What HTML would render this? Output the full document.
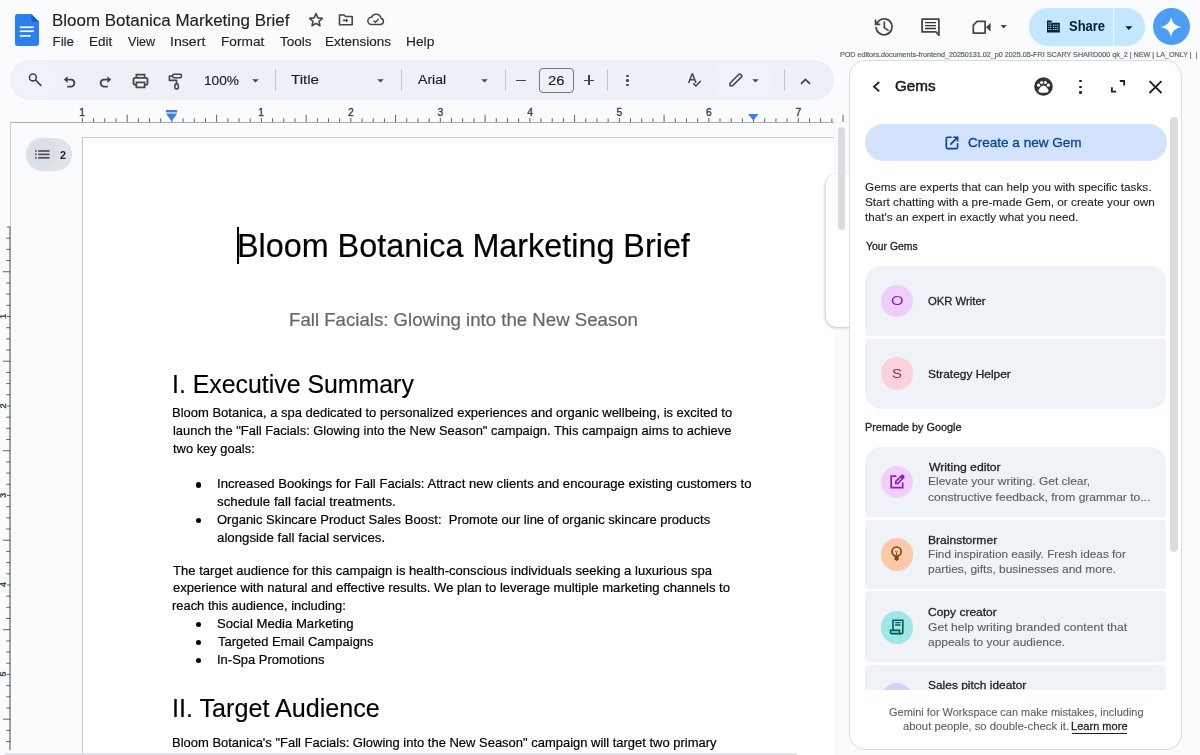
<!DOCTYPE html>
<html><head><meta charset="utf-8">
<style>
*{margin:0;padding:0;box-sizing:border-box}
html,body{width:1200px;height:755px;overflow:hidden;background:#f9fbfd;font-family:"Liberation Sans",sans-serif;color:#1f1f1f;position:relative}
.abs{position:absolute}
.t{position:absolute;white-space:nowrap;line-height:normal;transform-origin:0 0}
svg{position:absolute;overflow:visible}
</style></head><body>
<svg style="left:15px;top:14px;" width="24" height="32" viewBox="0 0 24 32"><path d="M2.2 0H16.3L24 7.8V29.6A2.3 2.3 0 0 1 21.7 32H2.3A2.3 2.3 0 0 1 0 29.6V2.3A2.3 2.3 0 0 1 2.2 0Z" fill="#2b7ff0"/><path d="M16.3 0L24 7.8H18.3A2 2 0 0 1 16.3 5.8Z" fill="#1a5fd0"/><rect x="4.8" y="12.4" width="14" height="1.7" fill="#fff"/><rect x="4.8" y="16.4" width="14" height="1.7" fill="#fff"/><rect x="4.8" y="21" width="10.8" height="1.7" fill="#fff"/></svg>
<div class="t " style="left:51.61px;top:10.91px;font-size:16.40px;color:#1f1f1f;transform:scaleX(1.0346);-webkit-text-stroke:0.15px #1f1f1f;">Bloom Botanica Marketing Brief</div>
<svg style="left:308px;top:12px;" width="16" height="15" viewBox="0 0 16 15"><path d="M8 1.6L9.9 5.9L14.4 6.3L11 9.3L12 13.8L8 11.4L4 13.8L5 9.3L1.6 6.3L6.1 5.9Z" fill="none" stroke="#444746" stroke-width="1.6" stroke-linejoin="round"/></svg>
<svg style="left:338px;top:14px;" width="16" height="12" viewBox="0 0 16 12"><path d="M1.5 1H6L7.5 2.5H14.2V10.8H1.5Z" fill="none" stroke="#444746" stroke-width="1.6" stroke-linejoin="round"/><path d="M5 6.4H8.6" stroke="#444746" stroke-width="1.6"/><path d="M8 4.2L10.4 6.4L8 8.6Z" fill="#444746"/></svg>
<svg style="left:367px;top:14px;" width="18" height="12" viewBox="0 0 18 12"><path d="M4.5 10.6H13.8A3.3 3.3 0 0 0 14 4.2A5 5 0 0 0 4.6 3.2A3.7 3.7 0 0 0 4.5 10.6Z" fill="none" stroke="#444746" stroke-width="1.5"/><path d="M6.6 6.6L8.4 8.3L11.6 5" fill="none" stroke="#444746" stroke-width="1.5"/></svg>
<div class="t " style="left:52.62px;top:33.86px;font-size:13.20px;color:#1f1f1f;-webkit-text-stroke:0.15px #1f1f1f;">File</div>
<div class="t " style="left:88.60px;top:33.86px;font-size:13.20px;color:#1f1f1f;transform:scaleX(1.0201);-webkit-text-stroke:0.15px #1f1f1f;">Edit</div>
<div class="t " style="left:128.24px;top:33.86px;font-size:13.20px;color:#1f1f1f;transform:scaleX(0.9524);-webkit-text-stroke:0.15px #1f1f1f;">View</div>
<div class="t " style="left:169.99px;top:33.86px;font-size:13.20px;color:#1f1f1f;transform:scaleX(1.0726);-webkit-text-stroke:0.15px #1f1f1f;">Insert</div>
<div class="t " style="left:220.58px;top:33.86px;font-size:13.20px;color:#1f1f1f;transform:scaleX(1.0363);-webkit-text-stroke:0.15px #1f1f1f;">Format</div>
<div class="t " style="left:279.70px;top:33.86px;font-size:13.20px;color:#1f1f1f;transform:scaleX(1.0252);-webkit-text-stroke:0.15px #1f1f1f;">Tools</div>
<div class="t " style="left:325.19px;top:33.86px;font-size:13.20px;color:#1f1f1f;transform:scaleX(1.0236);-webkit-text-stroke:0.15px #1f1f1f;">Extensions</div>
<div class="t " style="left:405.57px;top:33.86px;font-size:13.20px;color:#1f1f1f;transform:scaleX(1.0427);-webkit-text-stroke:0.15px #1f1f1f;">Help</div>
<svg style="left:870px;top:14px;" width="30" height="26" viewBox="0 0 30 26"><path d="M6.1 12.9A8 8 0 1 0 9.6 6.2" fill="none" stroke="#444746" stroke-width="1.75"/><path d="M5.6 5.6V10.3H10.3M5.6 10.3L9.8 6.1" fill="none" stroke="#444746" stroke-width="1.75"/><path d="M14.3 7.5V13.6L18.6 16.6" fill="none" stroke="#444746" stroke-width="1.75"/></svg>
<svg style="left:916px;top:14px;" width="30" height="26" viewBox="0 0 30 26"><path d="M6.1 5.1H22.9V21.2L19.9 17.9H6.1Z" fill="none" stroke="#444746" stroke-width="1.75" stroke-linejoin="round"/><path d="M9.1 8.6H20M9.1 11.55H20M9.1 14.5H20" stroke="#333" stroke-width="1.3"/></svg>
<svg style="left:966px;top:14px;" width="44" height="26" viewBox="0 0 44 26"><path d="M11.2 7.3H19.1V19.1H7.3V11.2Z" fill="none" stroke="#444746" stroke-width="1.75" stroke-linejoin="round"/><path d="M20 13.2L24.6 8.8V17.6Z" fill="#444746"/><path d="M34.5 11H40.8L37.65 14.4Z" fill="#444746"/></svg>
<div class="abs" style="left:1029px;top:8px;width:116px;height:38px;background:#c2e7ff;border-radius:19px;"></div>
<div class="abs" style="left:1113px;top:8px;width:1px;height:38px;background:#f9fbfd;"></div>
<svg style="left:1046px;top:19px;" width="16" height="15" viewBox="0 0 16 15"><path d="M1 1.4H5.7V3.75H13.8V13.4H1Z" fill="#001d35"/><rect x="2.3" y="3.4" width="1.2" height="1.1" fill="#c2e7ff"/><rect x="2.3" y="5.6" width="1.2" height="1.1" fill="#c2e7ff"/><rect x="2.3" y="7.8" width="1.2" height="1.1" fill="#c2e7ff"/><rect x="2.3" y="10.0" width="1.2" height="1.1" fill="#c2e7ff"/><rect x="4.2" y="3.4" width="1.2" height="1.1" fill="#c2e7ff"/><rect x="4.2" y="5.6" width="1.2" height="1.1" fill="#c2e7ff"/><rect x="4.2" y="7.8" width="1.2" height="1.1" fill="#c2e7ff"/><rect x="4.2" y="10.0" width="1.2" height="1.1" fill="#c2e7ff"/><rect x="7.0" y="5.6" width="1.2" height="1.1" fill="#c2e7ff"/><rect x="7.0" y="7.8" width="1.2" height="1.1" fill="#c2e7ff"/><rect x="7.0" y="10.0" width="1.2" height="1.1" fill="#c2e7ff"/><rect x="9.2" y="5.6" width="1.2" height="1.1" fill="#c2e7ff"/><rect x="9.2" y="7.8" width="1.2" height="1.1" fill="#c2e7ff"/><rect x="9.2" y="10.0" width="1.2" height="1.1" fill="#c2e7ff"/><rect x="11.2" y="5.6" width="1.2" height="1.1" fill="#c2e7ff"/><rect x="11.2" y="7.8" width="1.2" height="1.1" fill="#c2e7ff"/><rect x="11.2" y="10.0" width="1.2" height="1.1" fill="#c2e7ff"/></svg>
<div class="t " style="left:1069.13px;top:17.74px;font-size:14.20px;color:#001d35;font-weight:700;transform:scaleX(0.9126);">Share</div>
<svg style="left:1125px;top:26px;" width="8" height="4" viewBox="0 0 8 4"><path d="M0.3 0.2H7.3L3.8 3.9Z" fill="#001d35"/></svg>
<div class="abs" style="left:1152.7px;top:8.2px;width:37px;height:37px;background:#4b9df6;border-radius:50%;"></div>
<svg style="left:1160px;top:17px;" width="22" height="20" viewBox="0 0 22 20"><path d="M11 -0.2C11.8 5.3 15.2 9.1 21.6 10C15.2 10.9 11.8 14.7 11 20.2C10.2 14.7 6.8 10.9 0.4 10C6.8 9.1 10.2 5.3 11 -0.2Z" fill="#fff"/></svg>
<div class="t " style="left:840.41px;top:50.38px;font-size:7.30px;color:#5f6368;transform:scaleX(0.9835);-webkit-text-stroke:0.2px #5f6368;">POD editors.documents-frontend_20250131.02_p0 2025.05-FRI SCARY SHARD000 qk_2 | NEW | LA_ONLY | &nbsp;|</div>
<div class="abs" style="left:10px;top:60px;width:824px;height:40px;background:#edf1f7;border-radius:20px;"></div>
<div class="abs" style="left:12px;top:62px;width:44px;height:36px;background:#eff2f8;border-radius:18px 8px 8px 18px;"></div>
<svg style="left:24px;top:68px;" width="20" height="20" viewBox="0 0 20 20"><circle cx="8.9" cy="9.4" r="3.45" fill="none" stroke="#444746" stroke-width="1.6"/><path d="M11.5 12L17.3 17.8" stroke="#444746" stroke-width="1.7"/></svg>
<svg style="left:63px;top:75px;" width="14" height="13" viewBox="0 0 14 13"><path d="M3 4.6H8.6A3.6 3.6 0 0 1 8.6 11.6H4.2" fill="none" stroke="#444746" stroke-width="1.8"/><path d="M0.8 4.6L4.6 1.2V8Z" fill="#444746"/></svg>
<svg style="left:98px;top:75px;" width="14" height="13" viewBox="0 0 14 13"><path d="M11 4.6H5.4A3.6 3.6 0 0 0 5.4 11.6H9.8" fill="none" stroke="#444746" stroke-width="1.8"/><path d="M13.2 4.6L9.4 1.2V8Z" fill="#444746"/></svg>
<svg style="left:132px;top:73px;" width="17" height="16" viewBox="0 0 17 16"><path d="M4.4 4.6V1.6H12.6V4.6" fill="none" stroke="#444746" stroke-width="1.7"/><rect x="1.5" y="4.8" width="14" height="7" rx="1.6" fill="none" stroke="#444746" stroke-width="1.8"/><rect x="4.4" y="9.4" width="8.2" height="5" fill="#edf1f7" stroke="#444746" stroke-width="1.7"/></svg>
<svg style="left:168px;top:73px;" width="15" height="17" viewBox="0 0 15 17"><rect x="4.8" y="1.3" width="8.6" height="3.4" rx="1" fill="none" stroke="#444746" stroke-width="1.6"/><path d="M4.8 3H1.4V7.4H8.6V10.6" fill="none" stroke="#444746" stroke-width="1.6" stroke-linejoin="round"/><rect x="6.9" y="10.9" width="3.4" height="5" rx="1.5" fill="none" stroke="#444746" stroke-width="1.6"/></svg>
<div class="t " style="left:204.16px;top:73.46px;font-size:13.20px;color:#1f1f1f;transform:scaleX(1.0376);-webkit-text-stroke:0.15px #1f1f1f;">100%</div>
<svg style="left:252px;top:79px;" width="7" height="4" viewBox="0 0 7 4"><path d="M0.2 0.2H6.8L3.5 3.6Z" fill="#444746"/></svg>
<div class="abs" style="left:275px;top:69px;width:1px;height:22px;background:#c7c7c7;"></div>
<div class="abs" style="left:401px;top:69px;width:1px;height:22px;background:#c7c7c7;"></div>
<div class="abs" style="left:505px;top:69px;width:1px;height:22px;background:#c7c7c7;"></div>
<div class="abs" style="left:606.5px;top:69px;width:1px;height:22px;background:#c7c7c7;"></div>
<div class="abs" style="left:784px;top:69px;width:1px;height:22px;background:#c7c7c7;"></div>
<div class="t " style="left:290.86px;top:72.16px;font-size:13.20px;color:#1f1f1f;transform:scaleX(1.1458);-webkit-text-stroke:0.15px #1f1f1f;">Title</div>
<svg style="left:377px;top:79px;" width="7" height="4" viewBox="0 0 7 4"><path d="M0.2 0.2H6.8L3.5 3.6Z" fill="#444746"/></svg>
<div class="t " style="left:417.97px;top:72.16px;font-size:13.20px;color:#1f1f1f;transform:scaleX(1.0667);-webkit-text-stroke:0.15px #1f1f1f;">Arial</div>
<svg style="left:481px;top:79px;" width="7" height="4" viewBox="0 0 7 4"><path d="M0.2 0.2H6.8L3.5 3.6Z" fill="#444746"/></svg>
<div class="abs" style="left:516px;top:79.5px;width:10px;height:1.8px;background:#444746;"></div>
<div class="abs" style="left:538.5px;top:68px;width:35.5px;height:25px;border:1px solid #747775;border-radius:4px;"></div>
<div class="t " style="left:548.06px;top:72.86px;font-size:13.20px;color:#1f1f1f;transform:scaleX(1.1162);-webkit-text-stroke:0.15px #1f1f1f;">26</div>
<div class="abs" style="left:583.8px;top:79.5px;width:10px;height:1.8px;background:#444746;"></div>
<div class="abs" style="left:587.9px;top:75.4px;width:1.8px;height:10px;background:#444746;"></div>
<div class="abs" style="left:626.2px;top:74.9px;width:2.4px;height:2.4px;background:#444746;border-radius:50%;"></div>
<div class="abs" style="left:626.2px;top:79.4px;width:2.4px;height:2.4px;background:#444746;border-radius:50%;"></div>
<div class="abs" style="left:626.2px;top:83.9px;width:2.4px;height:2.4px;background:#444746;border-radius:50%;"></div>
<svg style="left:686px;top:72px;" width="17" height="16" viewBox="0 0 17 16"><path d="M2.6 10.9L6.1 2H6.6L10 10.9M3.9 7.8H8.8" fill="none" stroke="#444746" stroke-width="1.5"/><path d="M7.3 11.4L9.9 14L14.8 9" fill="none" stroke="#444746" stroke-width="1.5"/></svg>
<div class="abs" style="left:716px;top:63px;width:58px;height:34px;background:#eff2f8;border-radius:8px;"></div>
<svg style="left:728px;top:72px;" width="16" height="16" viewBox="0 0 16 16"><path d="M2 13.8V11.2L10.9 2.3A1.2 1.2 0 0 1 12.6 2.3L13.5 3.2A1.2 1.2 0 0 1 13.5 4.9L4.6 13.8Z" fill="none" stroke="#444746" stroke-width="1.6" stroke-linejoin="round"/></svg>
<svg style="left:752px;top:79px;" width="7" height="4" viewBox="0 0 7 4"><path d="M0.2 0.2H6.8L3.5 3.6Z" fill="#444746"/></svg>
<svg style="left:800px;top:78px;" width="11" height="7" viewBox="0 0 11 7"><path d="M1 5.8L5.5 1.4L10 5.8" fill="none" stroke="#444746" stroke-width="1.8"/></svg>
<div class="abs" style="left:9.5px;top:121.6px;width:825px;height:1px;background:#a8acb1;"></div>
<div class="abs" style="left:9.5px;top:122px;width:1px;height:105px;background:#c9ccd0;"></div>
<div class="abs" style="left:9.3px;top:227px;width:1.4px;height:522.5px;background:#9ea2a7;"></div>
<svg style="left:0;top:0" width="1200" height="130"><rect x="81.90" y="118" width="1" height="4" fill="#5f6368"/><rect x="93.09" y="118.3" width="1" height="3.7" fill="#5f6368"/><rect x="104.27" y="118.3" width="1" height="3.7" fill="#5f6368"/><rect x="115.46" y="118.3" width="1" height="3.7" fill="#5f6368"/><rect x="126.64" y="114.8" width="1" height="7.2" fill="#5f6368"/><rect x="137.83" y="118.3" width="1" height="3.7" fill="#5f6368"/><rect x="149.02" y="118.3" width="1" height="3.7" fill="#5f6368"/><rect x="160.20" y="118.3" width="1" height="3.7" fill="#5f6368"/><rect x="171.39" y="118" width="1" height="4" fill="#5f6368"/><rect x="182.57" y="118.3" width="1" height="3.7" fill="#5f6368"/><rect x="193.76" y="118.3" width="1" height="3.7" fill="#5f6368"/><rect x="204.95" y="118.3" width="1" height="3.7" fill="#5f6368"/><rect x="216.13" y="114.8" width="1" height="7.2" fill="#5f6368"/><rect x="227.32" y="118.3" width="1" height="3.7" fill="#5f6368"/><rect x="238.50" y="118.3" width="1" height="3.7" fill="#5f6368"/><rect x="249.69" y="118.3" width="1" height="3.7" fill="#5f6368"/><rect x="260.88" y="118" width="1" height="4" fill="#5f6368"/><rect x="272.06" y="118.3" width="1" height="3.7" fill="#5f6368"/><rect x="283.25" y="118.3" width="1" height="3.7" fill="#5f6368"/><rect x="294.43" y="118.3" width="1" height="3.7" fill="#5f6368"/><rect x="305.62" y="114.8" width="1" height="7.2" fill="#5f6368"/><rect x="316.81" y="118.3" width="1" height="3.7" fill="#5f6368"/><rect x="327.99" y="118.3" width="1" height="3.7" fill="#5f6368"/><rect x="339.18" y="118.3" width="1" height="3.7" fill="#5f6368"/><rect x="350.36" y="118" width="1" height="4" fill="#5f6368"/><rect x="361.55" y="118.3" width="1" height="3.7" fill="#5f6368"/><rect x="372.74" y="118.3" width="1" height="3.7" fill="#5f6368"/><rect x="383.92" y="118.3" width="1" height="3.7" fill="#5f6368"/><rect x="395.11" y="114.8" width="1" height="7.2" fill="#5f6368"/><rect x="406.29" y="118.3" width="1" height="3.7" fill="#5f6368"/><rect x="417.48" y="118.3" width="1" height="3.7" fill="#5f6368"/><rect x="428.67" y="118.3" width="1" height="3.7" fill="#5f6368"/><rect x="439.85" y="118" width="1" height="4" fill="#5f6368"/><rect x="451.04" y="118.3" width="1" height="3.7" fill="#5f6368"/><rect x="462.22" y="118.3" width="1" height="3.7" fill="#5f6368"/><rect x="473.41" y="118.3" width="1" height="3.7" fill="#5f6368"/><rect x="484.60" y="114.8" width="1" height="7.2" fill="#5f6368"/><rect x="495.78" y="118.3" width="1" height="3.7" fill="#5f6368"/><rect x="506.97" y="118.3" width="1" height="3.7" fill="#5f6368"/><rect x="518.15" y="118.3" width="1" height="3.7" fill="#5f6368"/><rect x="529.34" y="118" width="1" height="4" fill="#5f6368"/><rect x="540.53" y="118.3" width="1" height="3.7" fill="#5f6368"/><rect x="551.71" y="118.3" width="1" height="3.7" fill="#5f6368"/><rect x="562.90" y="118.3" width="1" height="3.7" fill="#5f6368"/><rect x="574.08" y="114.8" width="1" height="7.2" fill="#5f6368"/><rect x="585.27" y="118.3" width="1" height="3.7" fill="#5f6368"/><rect x="596.46" y="118.3" width="1" height="3.7" fill="#5f6368"/><rect x="607.64" y="118.3" width="1" height="3.7" fill="#5f6368"/><rect x="618.83" y="118" width="1" height="4" fill="#5f6368"/><rect x="630.01" y="118.3" width="1" height="3.7" fill="#5f6368"/><rect x="641.20" y="118.3" width="1" height="3.7" fill="#5f6368"/><rect x="652.39" y="118.3" width="1" height="3.7" fill="#5f6368"/><rect x="663.57" y="114.8" width="1" height="7.2" fill="#5f6368"/><rect x="674.76" y="118.3" width="1" height="3.7" fill="#5f6368"/><rect x="685.94" y="118.3" width="1" height="3.7" fill="#5f6368"/><rect x="697.13" y="118.3" width="1" height="3.7" fill="#5f6368"/><rect x="708.32" y="118" width="1" height="4" fill="#5f6368"/><rect x="719.50" y="118.3" width="1" height="3.7" fill="#5f6368"/><rect x="730.69" y="118.3" width="1" height="3.7" fill="#5f6368"/><rect x="741.87" y="118.3" width="1" height="3.7" fill="#5f6368"/><rect x="753.06" y="114.8" width="1" height="7.2" fill="#5f6368"/><rect x="764.25" y="118.3" width="1" height="3.7" fill="#5f6368"/><rect x="775.43" y="118.3" width="1" height="3.7" fill="#5f6368"/><rect x="786.62" y="118.3" width="1" height="3.7" fill="#5f6368"/><rect x="797.80" y="118" width="1" height="4" fill="#5f6368"/><rect x="808.99" y="118.3" width="1" height="3.7" fill="#5f6368"/><rect x="820.18" y="118.3" width="1" height="3.7" fill="#5f6368"/><rect x="831.36" y="118.3" width="1" height="3.7" fill="#5f6368"/><rect x="842.55" y="114.8" width="1" height="7.2" fill="#5f6368"/></svg>
<div class="t " style="left:79.22px;top:107.22px;font-size:10.20px;color:#3c4043;-webkit-text-stroke:0.35px currentColor;">1</div>
<div class="t " style="left:258.20px;top:107.22px;font-size:10.20px;color:#3c4043;-webkit-text-stroke:0.35px currentColor;">1</div>
<div class="t " style="left:347.96px;top:107.22px;font-size:10.20px;color:#3c4043;-webkit-text-stroke:0.35px currentColor;">2</div>
<div class="t " style="left:437.57px;top:107.22px;font-size:10.20px;color:#3c4043;-webkit-text-stroke:0.35px currentColor;">3</div>
<div class="t " style="left:527.22px;top:107.22px;font-size:10.20px;color:#3c4043;-webkit-text-stroke:0.35px currentColor;">4</div>
<div class="t " style="left:616.53px;top:107.22px;font-size:10.20px;color:#3c4043;-webkit-text-stroke:0.35px currentColor;">5</div>
<div class="t " style="left:705.91px;top:107.22px;font-size:10.20px;color:#3c4043;-webkit-text-stroke:0.35px currentColor;">6</div>
<div class="t " style="left:795.40px;top:107.22px;font-size:10.20px;color:#3c4043;-webkit-text-stroke:0.35px currentColor;">7</div>
<svg style="left:166px;top:110px;" width="12" height="12" viewBox="0 0 12 12"><rect x="0" y="0" width="11.2" height="2.4" fill="#3b7ded"/><path d="M0 3.6H11.2L5.6 11.2Z" fill="#3b7ded"/></svg>
<svg style="left:748.3px;top:114px;" width="12" height="8" viewBox="0 0 12 8"><path d="M0 0H10.6L5.3 6.6Z" fill="#3b7ded"/></svg>
<svg style="left:0;top:0" width="20" height="755"><rect x="7" y="226.50" width="3.5" height="1" fill="#5f6368"/><rect x="6.3" y="237.69" width="4.2" height="1" fill="#5f6368"/><rect x="6.3" y="248.87" width="4.2" height="1" fill="#5f6368"/><rect x="6.3" y="260.06" width="4.2" height="1" fill="#5f6368"/><rect x="3" y="271.24" width="7.5" height="1" fill="#5f6368"/><rect x="6.3" y="282.43" width="4.2" height="1" fill="#5f6368"/><rect x="6.3" y="293.62" width="4.2" height="1" fill="#5f6368"/><rect x="6.3" y="304.80" width="4.2" height="1" fill="#5f6368"/><rect x="7" y="315.99" width="3.5" height="1" fill="#5f6368"/><rect x="6.3" y="327.17" width="4.2" height="1" fill="#5f6368"/><rect x="6.3" y="338.36" width="4.2" height="1" fill="#5f6368"/><rect x="6.3" y="349.55" width="4.2" height="1" fill="#5f6368"/><rect x="3" y="360.73" width="7.5" height="1" fill="#5f6368"/><rect x="6.3" y="371.92" width="4.2" height="1" fill="#5f6368"/><rect x="6.3" y="383.10" width="4.2" height="1" fill="#5f6368"/><rect x="6.3" y="394.29" width="4.2" height="1" fill="#5f6368"/><rect x="7" y="405.48" width="3.5" height="1" fill="#5f6368"/><rect x="6.3" y="416.66" width="4.2" height="1" fill="#5f6368"/><rect x="6.3" y="427.85" width="4.2" height="1" fill="#5f6368"/><rect x="6.3" y="439.03" width="4.2" height="1" fill="#5f6368"/><rect x="3" y="450.22" width="7.5" height="1" fill="#5f6368"/><rect x="6.3" y="461.41" width="4.2" height="1" fill="#5f6368"/><rect x="6.3" y="472.59" width="4.2" height="1" fill="#5f6368"/><rect x="6.3" y="483.78" width="4.2" height="1" fill="#5f6368"/><rect x="7" y="494.96" width="3.5" height="1" fill="#5f6368"/><rect x="6.3" y="506.15" width="4.2" height="1" fill="#5f6368"/><rect x="6.3" y="517.34" width="4.2" height="1" fill="#5f6368"/><rect x="6.3" y="528.52" width="4.2" height="1" fill="#5f6368"/><rect x="3" y="539.71" width="7.5" height="1" fill="#5f6368"/><rect x="6.3" y="550.89" width="4.2" height="1" fill="#5f6368"/><rect x="6.3" y="562.08" width="4.2" height="1" fill="#5f6368"/><rect x="6.3" y="573.27" width="4.2" height="1" fill="#5f6368"/><rect x="7" y="584.45" width="3.5" height="1" fill="#5f6368"/><rect x="6.3" y="595.64" width="4.2" height="1" fill="#5f6368"/><rect x="6.3" y="606.82" width="4.2" height="1" fill="#5f6368"/><rect x="6.3" y="618.01" width="4.2" height="1" fill="#5f6368"/><rect x="3" y="629.20" width="7.5" height="1" fill="#5f6368"/><rect x="6.3" y="640.38" width="4.2" height="1" fill="#5f6368"/><rect x="6.3" y="651.57" width="4.2" height="1" fill="#5f6368"/><rect x="6.3" y="662.75" width="4.2" height="1" fill="#5f6368"/><rect x="7" y="673.94" width="3.5" height="1" fill="#5f6368"/><rect x="6.3" y="685.13" width="4.2" height="1" fill="#5f6368"/><rect x="6.3" y="696.31" width="4.2" height="1" fill="#5f6368"/><rect x="6.3" y="707.50" width="4.2" height="1" fill="#5f6368"/><rect x="3" y="718.68" width="7.5" height="1" fill="#5f6368"/><rect x="6.3" y="729.87" width="4.2" height="1" fill="#5f6368"/><rect x="6.3" y="741.06" width="4.2" height="1" fill="#5f6368"/><text x="0" y="0" transform="translate(2.2 316.42) rotate(-90)" font-family="Liberation Sans" font-size="9.5" font-weight="700" fill="#3c4043" text-anchor="middle" dominant-baseline="central">1</text><text x="0" y="0" transform="translate(2.2 405.85) rotate(-90)" font-family="Liberation Sans" font-size="9.5" font-weight="700" fill="#3c4043" text-anchor="middle" dominant-baseline="central">2</text><text x="0" y="0" transform="translate(2.2 495.27) rotate(-90)" font-family="Liberation Sans" font-size="9.5" font-weight="700" fill="#3c4043" text-anchor="middle" dominant-baseline="central">3</text><text x="0" y="0" transform="translate(2.2 584.70) rotate(-90)" font-family="Liberation Sans" font-size="9.5" font-weight="700" fill="#3c4043" text-anchor="middle" dominant-baseline="central">4</text><text x="0" y="0" transform="translate(2.2 674.12) rotate(-90)" font-family="Liberation Sans" font-size="9.5" font-weight="700" fill="#3c4043" text-anchor="middle" dominant-baseline="central">5</text></svg>
<div class="abs" style="left:25.5px;top:137.8px;width:46px;height:33px;background:#dfe4eb;border-radius:16.5px;"></div>
<div class="abs" style="left:27px;top:138.3px;width:32px;height:32px;background:#d9dfe7;border-radius:50%;filter:blur(1.5px);"></div>
<svg style="left:35px;top:150px;" width="15" height="10" viewBox="0 0 15 10"><rect x="0" y="0.2" width="1.6" height="1.6" fill="#444746"/><rect x="0" y="3.6" width="1.6" height="1.6" fill="#444746"/><rect x="0" y="7" width="1.6" height="1.6" fill="#444746"/><rect x="3.2" y="0.2" width="11.3" height="1.6" fill="#444746"/><rect x="3.2" y="3.6" width="11.3" height="1.6" fill="#444746"/><rect x="3.2" y="7" width="11.3" height="1.6" fill="#444746"/></svg>
<div class="t " style="left:59.83px;top:147.64px;font-size:11.80px;color:#1f1f1f;font-weight:700;transform:scaleX(0.9153);">2</div>
<div class="abs" style="left:82px;top:137px;width:752px;height:618px;background:#fff;border-left:1px solid #c7c7c7;border-top:1px solid #c7c7c7;"></div>
<div class="abs" style="left:5px;top:753px;width:792px;height:2px;background:#e1e3e6;"></div>
<div class="abs" style="left:237px;top:227.2px;width:1.8px;height:37px;background:#000;"></div>
<div class="t " style="left:236.95px;top:227.46px;font-size:33.20px;color:#000;transform:scaleX(0.9742);-webkit-text-stroke:0.2px #000;">Bloom Botanica Marketing Brief</div>
<div class="t " style="left:289.07px;top:308.51px;font-size:18.90px;color:#666666;transform:scaleX(0.9862);-webkit-text-stroke:0.2px #666;">Fall Facials: Glowing into the New Season</div>
<div class="t " style="left:172.31px;top:369.66px;font-size:25.80px;color:#000;transform:scaleX(0.9639);-webkit-text-stroke:0.15px #000;">I. Executive Summary</div>
<div class="t " style="left:172.43px;top:404.87px;font-size:13.40px;color:#000;transform:scaleX(0.9698);-webkit-text-stroke:0.2px #000;">Bloom Botanica, a spa dedicated to personalized experiences and organic wellbeing, is excited to</div>
<div class="t " style="left:172.63px;top:422.87px;font-size:13.40px;color:#000;transform:scaleX(0.9649);-webkit-text-stroke:0.2px #000;">launch the "Fall Facials: Glowing into the New Season" campaign. This campaign aims to achieve</div>
<div class="t " style="left:173.30px;top:440.87px;font-size:13.40px;color:#000;transform:scaleX(0.9631);-webkit-text-stroke:0.2px #000;">two key goals:</div>
<div class="t " style="left:216.69px;top:476.47px;font-size:13.40px;color:#000;transform:scaleX(0.9783);-webkit-text-stroke:0.2px #000;">Increased Bookings for Fall Facials: Attract new clients and encourage existing customers to</div>
<div class="t " style="left:217.43px;top:494.27px;font-size:13.40px;color:#000;transform:scaleX(0.9924);-webkit-text-stroke:0.2px #000;">schedule fall facial treatments.</div>
<div class="t " style="left:217.28px;top:512.37px;font-size:13.40px;color:#000;transform:scaleX(0.9701);-webkit-text-stroke:0.2px #000;">Organic Skincare Product Sales Boost:&nbsp; Promote our line of organic skincare products</div>
<div class="t " style="left:217.24px;top:530.17px;font-size:13.40px;color:#000;transform:scaleX(0.9909);-webkit-text-stroke:0.2px #000;">alongside fall facial services.</div>
<div class="t " style="left:172.91px;top:562.57px;font-size:13.40px;color:#000;transform:scaleX(0.9759);-webkit-text-stroke:0.2px #000;">The target audience for this campaign is health-conscious individuals seeking a luxurious spa</div>
<div class="t " style="left:172.64px;top:580.37px;font-size:13.40px;color:#000;transform:scaleX(0.9752);-webkit-text-stroke:0.2px #000;">experience with natural and effective results. We plan to leverage multiple marketing channels to</div>
<div class="t " style="left:172.34px;top:598.17px;font-size:13.40px;color:#000;transform:scaleX(0.9643);-webkit-text-stroke:0.2px #000;">reach this audience, including:</div>
<div class="t " style="left:217.00px;top:616.37px;font-size:13.40px;color:#000;transform:scaleX(0.9818);-webkit-text-stroke:0.2px #000;">Social Media Marketing</div>
<div class="t " style="left:217.81px;top:634.27px;font-size:13.40px;color:#000;transform:scaleX(0.9675);-webkit-text-stroke:0.2px #000;">Targeted Email Campaigns</div>
<div class="t " style="left:216.90px;top:652.27px;font-size:13.40px;color:#000;transform:scaleX(0.9693);-webkit-text-stroke:0.2px #000;">In-Spa Promotions</div>
<div class="t " style="left:172.14px;top:735.17px;font-size:13.40px;color:#000;transform:scaleX(0.9688);-webkit-text-stroke:0.2px #000;">Bloom Botanica&#39;s "Fall Facials: Glowing into the New Season" campaign will target two primary</div>
<div class="abs" style="left:196.2px;top:482.40000000000003px;width:5.2px;height:5.2px;background:#000;border-radius:50%;"></div>
<div class="abs" style="left:196.2px;top:518.3000000000001px;width:5.2px;height:5.2px;background:#000;border-radius:50%;"></div>
<div class="abs" style="left:196.2px;top:622.3000000000001px;width:5.2px;height:5.2px;background:#000;border-radius:50%;"></div>
<div class="abs" style="left:196.2px;top:640.2px;width:5.2px;height:5.2px;background:#000;border-radius:50%;"></div>
<div class="abs" style="left:196.2px;top:658.2px;width:5.2px;height:5.2px;background:#000;border-radius:50%;"></div>
<div class="t " style="left:172.28px;top:694.06px;font-size:25.80px;color:#000;transform:scaleX(0.9746);-webkit-text-stroke:0.15px #000;">II. Target Audience</div>
<div class="abs" style="left:834px;top:122px;width:16px;height:633px;background:#f9fbfd;"></div>
<div class="abs" style="left:826.2px;top:173.5px;width:30px;height:153px;background:#fff;border-radius:11px 0 0 11px;box-shadow:-1px 1px 3px rgba(60,64,67,0.3);"></div>
<div class="abs" style="left:838.3px;top:127px;width:7px;height:103px;background:#dadce0;border-radius:3.5px;"></div>
<div class="abs" style="left:849px;top:60px;width:332.5px;height:689.5px;background:#fff;border:1px solid #dadce0;border-radius:16px;"></div>
<svg style="left:872px;top:81px;" width="9" height="12" viewBox="0 0 9 12"><path d="M7.2 1L2 5.7L7.2 10.4" fill="none" stroke="#1f1f1f" stroke-width="1.8"/></svg>
<div class="t " style="left:894.83px;top:78.47px;font-size:14.60px;color:#1f1f1f;transform:scaleX(1.0457);-webkit-text-stroke:0.5px #1f1f1f;">Gems</div>
<svg style="left:1033px;top:76px;" width="21" height="21" viewBox="0 0 21 21"><circle cx="10.5" cy="10.5" r="9.3" fill="#333"/><circle cx="5.6" cy="9.2" r="1.6" fill="#fff"/><circle cx="8.6" cy="6.4" r="1.5" fill="#fff"/><circle cx="12.4" cy="6.4" r="1.5" fill="#fff"/><circle cx="15.4" cy="9.2" r="1.6" fill="#fff"/><path d="M10.5 9.8C12.6 9.8 15.6 13.6 15.6 15.2C15.6 16.6 13.4 17 10.5 17C7.6 17 5.4 16.6 5.4 15.2C5.4 13.6 8.4 9.8 10.5 9.8Z" fill="#fff" transform="translate(0 -0.3)"/><circle cx="10.5" cy="10.5" r="7.2" fill="#1f1f1f" opacity="0"/></svg>
<div class="abs" style="left:1079.4px;top:79.60000000000001px;width:2.6px;height:2.6px;background:#1f1f1f;border-radius:50%;"></div>
<div class="abs" style="left:1079.4px;top:85.5px;width:2.6px;height:2.6px;background:#1f1f1f;border-radius:50%;"></div>
<div class="abs" style="left:1079.4px;top:91.4px;width:2.6px;height:2.6px;background:#1f1f1f;border-radius:50%;"></div>
<svg style="left:1110px;top:79px;" width="16" height="15" viewBox="0 0 16 15"><path d="M1.9 8.2V12.6H6.2M9.8 2H14.1V6.4" fill="none" stroke="#1f1f1f" stroke-width="1.8"/></svg>
<svg style="left:1148px;top:80px;" width="15" height="14" viewBox="0 0 15 14"><path d="M1.5 1.2L13.5 13M13.5 1.2L1.5 13" fill="none" stroke="#1f1f1f" stroke-width="1.8"/></svg>
<div class="abs" style="left:1170px;top:116.5px;width:7.8px;height:435.2px;background:#dadce0;border-radius:4px;"></div>
<div class="abs" style="left:865px;top:124.3px;width:301.5px;height:36.6px;background:#d3e3fd;border-radius:18.3px;"></div>
<svg style="left:945px;top:135.5px;" width="14" height="14" viewBox="0 0 14 14"><path d="M6.6 1.3H2.6A1.3 1.3 0 0 0 1.3 2.6V11.3A1.3 1.3 0 0 0 2.6 12.6H11.3A1.3 1.3 0 0 0 12.6 11.3V7.3" fill="none" stroke="#0842a0" stroke-width="1.6"/><path d="M5.3 8.6L12 1.9M8.3 1.3H12.6V5.6" fill="none" stroke="#0842a0" stroke-width="1.6"/></svg>
<div class="t " style="left:967.51px;top:134.59px;font-size:13.60px;color:#0842a0;transform:scaleX(0.9951);-webkit-text-stroke:0.3px currentColor;">Create a new Gem</div>
<div class="t " style="left:865.01px;top:180.43px;font-size:11.60px;color:#1f1f1f;transform:scaleX(1.0124);-webkit-text-stroke:0.12px currentColor;">Gems are experts that can help you with specific tasks.</div>
<div class="t " style="left:865.07px;top:195.13px;font-size:11.60px;color:#1f1f1f;transform:scaleX(1.0150);-webkit-text-stroke:0.12px currentColor;">Start chatting with a pre-made Gem, or create your own</div>
<div class="t " style="left:865.42px;top:209.73px;font-size:11.60px;color:#1f1f1f;transform:scaleX(1.0043);-webkit-text-stroke:0.12px currentColor;">that&#39;s an expert in exactly what you need.</div>
<div class="t " style="left:865.57px;top:240.60px;font-size:10.00px;color:#1f1f1f;transform:scaleX(1.0393);-webkit-text-stroke:0.3px currentColor;">Your Gems</div>
<div class="abs" style="left:865px;top:265.7px;width:301px;height:70.1px;background:#eff2f7;border-radius:16px 16px 4px 4px;"></div>
<div class="abs" style="left:865px;top:338.5px;width:301px;height:70.6px;background:#eff2f7;border-radius:4px 4px 16px 16px;"></div>
<div class="abs" style="left:880.5px;top:284.5px;width:32.8px;height:32.8px;background:#f0cefb;border-radius:50%;"></div>
<div class="t " style="left:890.74px;top:293.27px;font-size:13.40px;color:#8c1dc0;transform:scaleX(1.2026);">O</div>
<div class="abs" style="left:880.5px;top:357.3px;width:32.8px;height:32.8px;background:#fcd1dc;border-radius:50%;"></div>
<div class="t " style="left:891.62px;top:366.07px;font-size:13.40px;color:#8d2c57;transform:scaleX(1.1148);">S</div>
<div class="t " style="left:928.37px;top:294.43px;font-size:11.60px;color:#1f1f1f;transform:scaleX(0.9737);-webkit-text-stroke:0.3px currentColor;">OKR Writer</div>
<div class="t " style="left:928.36px;top:367.03px;font-size:11.60px;color:#1f1f1f;transform:scaleX(1.0278);-webkit-text-stroke:0.3px currentColor;">Strategy Helper</div>
<div class="t " style="left:864.91px;top:421.90px;font-size:10.00px;color:#1f1f1f;transform:scaleX(1.0858);-webkit-text-stroke:0.3px currentColor;">Premade by Google</div>
<div class="abs" style="left:850px;top:440px;width:316px;height:249.7px;overflow:hidden">
<div class="abs" style="left:15px;top:6.699999999999989px;width:301px;height:70.1px;background:#eff2f7;border-radius:16px 16px 4px 4px;"></div>
<div class="abs" style="left:30.5px;top:25.49999999999998px;width:32.8px;height:32.8px;background:#f1cffb;border-radius:50%;"></div>
<svg style="left:39px;top:34px;" width="16" height="16" viewBox="0 0 16 16"><path d="M7.4 2.2H2.2V13.7H13.7V8.5" fill="none" stroke="#8a1fbf" stroke-width="1.7"/><path d="M6.8 9.6L6.8 7.4L12.4 1.8A1.2 1.2 0 0 1 14.2 1.8L14.4 2A1.2 1.2 0 0 1 14.4 3.8L8.8 9.4Z" fill="none" stroke="#8a1fbf" stroke-width="1.6"/><path d="M11.9 2.3L13.9 4.3" stroke="#8a1fbf" stroke-width="2.4"/></svg>
<div class="t " style="left:78.85px;top:20.03px;font-size:11.60px;color:#1f1f1f;transform:scaleX(1.0519);-webkit-text-stroke:0.3px currentColor;">Writing editor</div>
<div class="t " style="left:77.92px;top:34.43px;font-size:11.60px;color:#5e5e5e;transform:scaleX(1.0314);-webkit-text-stroke:0.12px currentColor;">Elevate your writing. Get clear,</div>
<div class="t " style="left:78.39px;top:49.73px;font-size:11.60px;color:#5e5e5e;transform:scaleX(1.0391);-webkit-text-stroke:0.12px currentColor;">constructive feedback, from grammar to...</div>
<div class="abs" style="left:15px;top:79.5px;width:301px;height:69.8px;background:#eff2f7;border-radius:4px;"></div>
<div class="abs" style="left:30.5px;top:98.30000000000004px;width:32.8px;height:32.8px;background:#fcc9a8;border-radius:50%;"></div>
<svg style="left:41px;top:106px;" width="12" height="16" viewBox="0 0 12 16"><circle cx="5.6" cy="5.6" r="4.6" fill="none" stroke="#7f4410" stroke-width="1.6"/><path d="M3.6 10H7.6V13.2L5.6 15.2L3.6 13.2Z" fill="#7f4410"/><path d="M5.6 6.4V9.6M4.4 5.2L5.6 6.4L6.8 5.2" fill="none" stroke="#7f4410" stroke-width="1"/></svg>
<div class="t " style="left:77.91px;top:92.83px;font-size:11.60px;color:#1f1f1f;transform:scaleX(1.0421);-webkit-text-stroke:0.3px currentColor;">Brainstormer</div>
<div class="t " style="left:77.93px;top:107.23px;font-size:11.60px;color:#5e5e5e;transform:scaleX(1.0178);-webkit-text-stroke:0.12px currentColor;">Find inspiration easily. Fresh ideas for</div>
<div class="t " style="left:78.13px;top:122.23px;font-size:11.60px;color:#5e5e5e;transform:scaleX(1.0301);-webkit-text-stroke:0.12px currentColor;">parties, gifts, businesses and more.</div>
<div class="abs" style="left:15px;top:151.29999999999995px;width:301px;height:70.7px;background:#eff2f7;border-radius:4px;"></div>
<div class="abs" style="left:30.5px;top:170.89999999999995px;width:32.8px;height:32.8px;background:#9fe6e6;border-radius:50%;"></div>
<svg style="left:39px;top:178px;" width="15" height="17" viewBox="0 0 15 17"><path d="M4 12.4V2.2H13.8V14.6A1 1 0 0 1 12.8 15.6H10.5" fill="none" stroke="#005c57" stroke-width="1.6"/><path d="M6.2 4.6H11.5M6.2 7H11.5" stroke="#005c57" stroke-width="1.4"/><path d="M1.5 12.4H10.5V15.6H2.6A1.1 1.1 0 0 1 1.5 14.5Z" fill="none" stroke="#005c57" stroke-width="1.6"/></svg>
<div class="t " style="left:78.29px;top:165.23px;font-size:11.60px;color:#1f1f1f;transform:scaleX(1.0362);-webkit-text-stroke:0.3px currentColor;">Copy creator</div>
<div class="t " style="left:78.29px;top:179.53px;font-size:11.60px;color:#5e5e5e;transform:scaleX(1.0476);-webkit-text-stroke:0.12px currentColor;">Get help writing branded content that</div>
<div class="t " style="left:78.39px;top:194.83px;font-size:11.60px;color:#5e5e5e;transform:scaleX(1.0312);-webkit-text-stroke:0.12px currentColor;">appeals to your audience.</div>
<div class="abs" style="left:15px;top:225.20000000000005px;width:301px;height:70px;background:#eff2f7;border-radius:4px;"></div>
<div class="abs" style="left:30.5px;top:242.80000000000004px;width:32.8px;height:32.8px;background:#dacffb;border-radius:50%;"></div>
<div class="t " style="left:78.36px;top:237.53px;font-size:11.60px;color:#1f1f1f;transform:scaleX(1.0304);-webkit-text-stroke:0.3px currentColor;">Sales pitch ideator</div>
</div>
<div class="t " style="left:888.55px;top:704.73px;font-size:11.60px;color:#5e5e5e;transform:scaleX(0.9457);-webkit-text-stroke:0.12px currentColor;">Gemini for Workspace can make mistakes, including</div>
<div class="t " style="left:903.32px;top:719.43px;font-size:11.60px;color:#5e5e5e;transform:scaleX(0.9757);-webkit-text-stroke:0.12px currentColor;">about people, so double-check it.</div>
<div class="t " style="left:1071.39px;top:719.43px;font-size:11.60px;color:#1f1f1f;transform:scaleX(0.9541);-webkit-text-stroke:0.3px currentColor;">Learn more</div>
<div class="abs" style="left:1072.3px;top:733px;width:55.2px;height:1px;background:#1f1f1f;"></div>
</body></html>
